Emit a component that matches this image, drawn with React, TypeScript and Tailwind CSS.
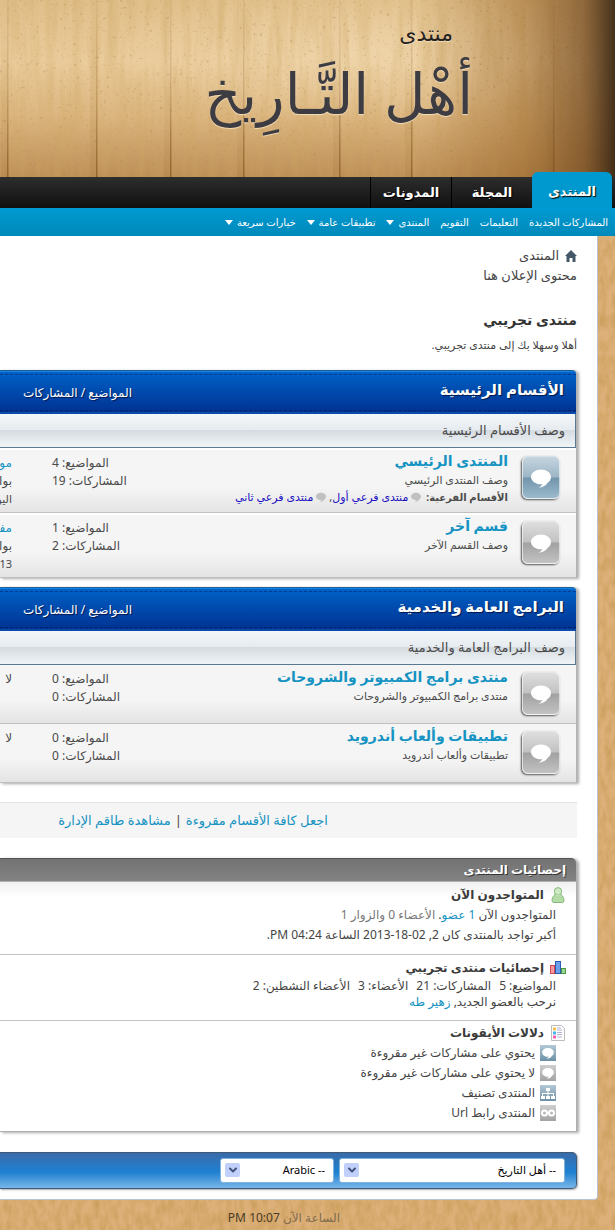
import React from "react";
import { ChevronDown } from "lucide-react";

type Forum = {
  title: string;
  description: string;
  topics: number;
  posts: number;
  isNew?: boolean;
  children?: string[];
  last: { title: string; author?: string; time?: string };
};
type Category = { title: string; description: string; forums: Forum[]; spaced: boolean };

const categories: Category[] = [
  {
    title: "الأقسام الرئيسية",
    description: "وصف الأقسام الرئيسية",
    spaced: true,
    forums: [
      {
        title: "المنتدى الرئيسي",
        description: "وصف المنتدى الرئيسي",
        topics: 4,
        posts: 19,
        isNew: true,
        children: ["منتدى فرعي أول", "منتدى فرعي ثاني"],
        last: { title: "موضوع", author: "بواسطة", time: "اليوم" },
      },
      {
        title: "قسم آخر",
        description: "وصف القسم الآخر",
        topics: 1,
        posts: 2,
        last: { title: "مفيد", author: "بواسطة", time: "13" },
      },
    ],
  },
  {
    title: "البرامج العامة والخدمية",
    description: "وصف البرامج العامة والخدمية",
    spaced: false,
    forums: [
      {
        title: "منتدى برامج الكمبيوتر والشروحات",
        description: "منتدى برامج الكمبيوتر والشروحات",
        topics: 0,
        posts: 0,
        last: { title: "لا" },
      },
      {
        title: "تطبيقات وألعاب أندرويد",
        description: "تطبيقات وألعاب أندرويد",
        topics: 0,
        posts: 0,
        last: { title: "لا" },
      },
    ],
  },
];

function Bubble({ className }: { className: string }) {
  return (
    <svg viewBox="0 0 24 24" className={className} fill="currentColor" aria-hidden="true">
      <path d="M12 3.500C6.500 3.500 2 6.900 2 11s4.500 7.300 10 7.300c.4 0 .9 0 1.300-.1-.7 1.500-2 2.700-3.800 3.600 4-.3 7.300-1.900 9-4.800C20.700 15.600 22 13.500 22 11c0-4.100-4.500-7.500-10-7.500z" />
    </svg>
  );
}

function WoodBackground() {
  return (
    <svg className="absolute inset-0 h-full w-full" aria-hidden="true">
      <filter id="fiber" x="0" y="0" width="100%" height="100%">
        <feTurbulence type="fractalNoise" baseFrequency="0.16 0.07" numOctaves="4" seed="4" />
        <feColorMatrix values="0 0 0 0 0.55  0 0 0 0 0.3  0 0 0 0 0.08  1.2 0 0 0 -0.4" />
      </filter>
      <rect width="100%" height="100%" fill="#dcb078" />
      <rect width="100%" height="100%" filter="url(#fiber)" />
    </svg>
  );
}

const planks = [7, 96, 170, 243, 339, 411, 553];

function BannerBackground() {
  return (
    <svg className="absolute inset-0 h-full w-full" viewBox="0 0 615 177" preserveAspectRatio="xMaxYMid slice" aria-hidden="true">
      <defs>
        <linearGradient id="base" x1="0" y1="0" x2="0" y2="1">
          <stop offset="0" stopColor="#e0bf8a" />
          <stop offset="0.35" stopColor="#eacb9b" />
          <stop offset="0.65" stopColor="#dcb680" />
          <stop offset="1" stopColor="#bd8f57" />
        </linearGradient>
        <radialGradient id="glow" cx="0.57" cy="0.3" r="0.4">
          <stop offset="0" stopColor="#f5dfba" stopOpacity="0.5" />
          <stop offset="1" stopColor="#f5dfba" stopOpacity="0" />
        </radialGradient>
        <linearGradient id="shade" x1="0" y1="0" x2="1" y2="0">
          <stop offset="0.68" stopColor="#8a551a" stopOpacity="0" />
          <stop offset="0.85" stopColor="#8a551a" stopOpacity="0.42" />
          <stop offset="0.95" stopColor="#6b421a" stopOpacity="0.7" />
          <stop offset="1" stopColor="#33210f" stopOpacity="0.9" />
        </linearGradient>
        <linearGradient id="seam" x1="0" y1="0" x2="0" y2="1">
          <stop offset="0" stopColor="#8a5a20" stopOpacity="0.08" />
          <stop offset="0.5" stopColor="#8a5a20" stopOpacity="0.25" />
          <stop offset="1" stopColor="#7b4c18" stopOpacity="0.65" />
        </linearGradient>
        <filter id="grain" x="0" y="0" width="100%" height="100%">
          <feTurbulence type="fractalNoise" baseFrequency="0.11 0.012" numOctaves="4" seed="9" />
          <feColorMatrix values="0 0 0 0 0.6  0 0 0 0 0.38  0 0 0 0 0.12  0.8 0 0 0 -0.3" />
        </filter>
        <filter id="specks" x="0" y="0" width="100%" height="100%">
          <feTurbulence type="fractalNoise" baseFrequency="0.3" numOctaves="3" seed="21" />
          <feColorMatrix values="0 0 0 0 0.42  0 0 0 0 0.25  0 0 0 0 0.08  4 0 0 0 -2.6" />
        </filter>
      </defs>
      <rect width="615" height="177" fill="url(#base)" />
      <rect width="615" height="177" fill="url(#glow)" />
      <rect width="615" height="177" filter="url(#grain)" />
      <rect width="615" height="177" filter="url(#specks)" opacity="0.5" />
      {planks.map((x) => (
        <g key={x}>
          <rect x={x} width="1.500" height="177" fill="url(#seam)" />
          <rect x={x - 6} width="6" height="177" fill="url(#seam)" opacity="0.15" />
        </g>
      ))}
      <rect width="615" height="177" fill="url(#shade)" />
    </svg>
  );
}

function Header() {
  return (
    <header className="relative">
      <div className="relative h-[177px] overflow-hidden">
        <BannerBackground />
        <h1 className="relative pr-[142px] text-[#3c3c42] [text-shadow:0_1px_1px_#f3ddb8]">
          <span className="block pt-4 pr-5 text-[22px] leading-8 text-[#26221f]">منتدى</span>
          <span className="block text-[57px] leading-[88px] whitespace-nowrap">أهْل التَّـارِيخ</span>
        </h1>
      </div>
      <nav className="relative flex h-[31px] items-end bg-linear-to-b from-[#2d2d2d] to-[#111] pr-[3px] text-[13px] font-bold text-white [text-shadow:1px_1px_1px_#000]">
        <a href="#forum" className="flex h-9 w-20 items-center justify-center rounded-t-md bg-[#0099cf] pt-1">المنتدى</a>
        <a href="#mag" className="flex h-[31px] w-[81px] items-center justify-center border-l border-black">المجلة</a>
        <a href="#blogs" className="flex h-[31px] w-[81px] items-center justify-center border-l border-black">المدونات</a>
      </nav>
      <nav className="relative flex h-7 items-center gap-[11px] bg-linear-to-b from-[#009ad2] to-[#0089ba] pr-[7px] text-[10px] whitespace-nowrap text-white">
        <a href="#new">المشاركات الجديدة</a>
        <a href="#help">التعليمات</a>
        <a href="#calendar">التقويم</a>
        {["المنتدى", "تطبيقات عامة", "خيارات سريعة"].map((label) => (
          <button key={label} type="button" className="flex items-center gap-1">
            {label}
            <svg viewBox="0 0 8 5" className="h-[5px] w-2" fill="currentColor" aria-hidden="true">
              <path d="M0 0h8L4 5z" />
            </svg>
          </button>
        ))}
      </nav>
    </header>
  );
}

function ForumIcon({ isNew }: { isNew?: boolean }) {
  return (
    <span
      className={
        "flex h-[43px] w-[38px] items-center justify-center rounded-md border border-white/60 text-white shadow-[-1px_1px_2px_#555] " +
        (isNew
          ? "bg-[linear-gradient(#c6d5df_0%,#9db6c6_48%,#7396ad_52%,#9bb9cb_100%)]"
          : "bg-[linear-gradient(#dedede_0%,#c2c2c2_48%,#a2a2a2_52%,#c2c2c2_100%)]")
      }
    >
      <Bubble className="h-6 w-6" />
    </span>
  );
}

const columns = "grid grid-cols-[minmax(0,1fr)_80px_12px] gap-x-10";

function ForumRow({ forum, spaced }: { forum: Forum; spaced: boolean }) {
  return (
    <li
      className={
        columns +
        " border-b border-[#bfbfbf] bg-linear-to-b from-[#f5f5f5] from-60% to-[#e4e4e4] text-[12px] leading-[18px] whitespace-nowrap text-[#4a4a4a] " +
        (spaced ? "min-h-[65px] border-t-2 border-t-white pt-px" : "min-h-[59px] pt-[2px]")
      }
    >
      <div className="flex gap-[14px] pr-4">
        <div className="pt-[5px]">
          <ForumIcon isNew={forum.isNew} />
        </div>
        <div>
          <h3 className="text-[14px] leading-5 font-bold text-[#1593c2]">
            <a href="#f">{forum.title}</a>
          </h3>
          <p className="text-[11px] leading-[18px]">{forum.description}</p>
          {forum.children && (
            <p className="flex items-center text-[11px] leading-4">
              <strong className="ml-[2px] text-[10px]">الأقسام الفرعية:</strong>
              {forum.children.map((child, i) => (
                <React.Fragment key={child}>
                  <Bubble className="mx-[2px] h-3 w-3 text-[#c0c0c0]" />
                  <a href="#s" className="text-[#1a10c4]">{child}</a>
                  {i === 0 && <span>,</span>}
                </React.Fragment>
              ))}
            </p>
          )}
        </div>
      </div>
      <div className="pt-[3px] text-left">
        <p>المواضيع: {forum.topics}</p>
        <p>المشاركات: {forum.posts}</p>
      </div>
      <div className="pt-[3px]">
        <p className={forum.last.author ? "text-[#1593c2]" : ""}>{forum.last.title}</p>
        <p>{forum.last.author}</p>
        <p className="text-[11px]">{forum.last.time}</p>
      </div>
    </li>
  );
}

function CategoryBlock({ category }: { category: Category }) {
  return (
    <section className="mb-[9px] rounded-tr-[4px] border-r border-[#b5b5b5] shadow-[2px_1px_3px_#aaa]">
      <div className="overflow-hidden rounded-tr-[4px] border-t border-[#1b5f9c] bg-linear-to-b from-[#0062c8] to-[#003090] py-[3px] shadow-[inset_0_1px_0_#1484e0,inset_0_-2px_0_#0a4aa8]">
        <div className={columns + " h-[37px] items-center border-y border-dashed border-t-[#003c92] border-b-[#002468] whitespace-nowrap text-white [text-shadow:1px_1px_1px_#00184d]"}>
          <h2 className="pr-3 pb-[6px] text-[15px] font-bold">{category.title}</h2>
          <span className="text-[12px]">المواضيع / المشاركات</span>
        </div>
      </div>
      <p className="flex h-[34px] items-center border-r border-b border-[#5b7891] bg-[linear-gradient(#f4f7f9_0%,#e6ebef_50%,#d5dce1_50%,#f0f4f7_100%)] pr-[10px] text-[13px] text-[#4a4a4a]">
        {category.description}
      </p>
      <ul>
        {category.forums.map((f) => (
          <ForumRow key={f.title} forum={f} spaced={category.spaced} />
        ))}
      </ul>
    </section>
  );
}

function UserIcon() {
  return (
    <svg viewBox="0 0 16 16" className="h-4 w-4" aria-hidden="true">
      <path d="M5 7.500C3 9 2 11.500 2 13.500q0 2 1.800 2h8.400q1.800 0 1.800-2c0-2-1-4.500-3-6z" fill="#b3dba6" stroke="#86b87c" />
      <circle cx="8" cy="4.300" r="3.700" fill="#cdeac2" stroke="#86b87c" />
      <path d="M5.500 8.200h5" stroke="#c0e2b4" strokeWidth="1.500" />
    </svg>
  );
}

function ChartIcon() {
  return (
    <svg viewBox="0 0 16 16" className="h-4 w-4" aria-hidden="true">
      <rect x="0.500" y="5.500" width="4" height="8" fill="#f59aa0" stroke="#d4454f" />
      <rect x="5.500" y="1.500" width="5" height="12" fill="#6b9fe8" stroke="#2a5cb3" />
      <rect x="11.500" y="8.500" width="4" height="5" fill="#9ad58f" stroke="#4a9a45" />
    </svg>
  );
}

function LegendIcon() {
  return (
    <svg viewBox="0 0 16 16" className="h-4 w-4" aria-hidden="true">
      <path d="M1.500.500h10l3 3v12h-13z" fill="#fff" stroke="#bdbdbd" />
      <path d="M3 2.500h3v3H3z" fill="#f0c24c" />
      <path d="M3 6.500h3v3H3z" fill="#4db4f5" />
      <path d="M3 10.500h3v3H3z" fill="#f261ab" />
      <path d="M7 3h4M7 5h5M7 7.500h5M7 9.500h5M7 12h5" stroke="#b3b3cf" />
    </svg>
  );
}

function LegendTile({ blue, kind }: { blue?: boolean; kind: "bubble" | "tree" | "link" }) {
  return (
    <span
      className={
        "flex h-4 w-4 items-center justify-center text-white " +
        (blue ? "bg-linear-to-b from-[#b4c9d6] to-[#6d90a6]" : "bg-linear-to-b from-[#cfcfcf] to-[#a3a3a3]")
      }
    >
      {kind === "bubble" && <Bubble className="h-[14px] w-[14px]" />}
      {kind === "tree" && (
        <svg viewBox="0 0 16 16" className="h-4 w-4" fill="currentColor" aria-hidden="true">
          <path d="M6 3h4v3H8.500v2H14v3h1v3h-4v-3h2V9H8.500v2H10v3H6v-3h1.500V9H3v2h2v3H1v-3h1V8h5.500V6H6z" />
        </svg>
      )}
      {kind === "link" && (
        <svg viewBox="0 0 16 16" className="h-4 w-4" fill="none" stroke="currentColor" strokeWidth="2" aria-hidden="true">
          <circle cx="4.500" cy="8" r="2.500" />
          <circle cx="11.500" cy="8" r="2.500" />
        </svg>
      )}
    </span>
  );
}

function StatHeading({ icon, children }: { icon: React.ReactNode; children: React.ReactNode }) {
  return (
    <h3 className="flex h-5 items-center gap-[6px] pr-[10px] text-[12px] font-bold text-[#3a3a3a]">
      {icon}
      {children}
    </h3>
  );
}

function Statistics() {
  return (
    <section className="rounded-tr-[5px] border-r border-b border-[#b0b0b0] text-[12px] whitespace-nowrap text-[#444] shadow-[2px_1px_3px_#aaa]">
      <h2 className="flex h-6 items-center rounded-tr-[5px] border-t border-b border-t-[#555] border-b-[#b0b0b0] bg-linear-to-b from-[#737373] to-[#828282] pr-[10px] text-[12px] font-bold text-white [text-shadow:1px_1px_0_#333]">
        إحصائيات المنتدى
      </h2>
      <div className="h-[73px] border-b border-[#c4c4c4] bg-linear-to-b from-[#f0f0f0] to-white to-20% pt-[3px]">
        <StatHeading icon={<UserIcon />}>المتواجدون الآن</StatHeading>
        <p className="pr-5 leading-5">
          المتواجدون الآن <a href="#online" className="text-[#1593c2]">1 عضو</a>. <span className="text-[#777]">الأعضاء 0 والزوار 1</span>
        </p>
        <p className="pr-5 leading-5">أكبر تواجد بالمنتدى كان 2, <bdi dir="ltr">2013-18-02</bdi> الساعة 04:24 PM.</p>
      </div>
      <div className="h-[66px] border-b border-[#c4c4c4] pt-[3px]">
        <StatHeading icon={<ChartIcon />}>إحصائيات منتدى تجريبي</StatHeading>
        <p className="flex gap-2 pr-5 leading-4">
          <span>المواضيع: 5</span>
          <span>المشاركات: 21</span>
          <span>الأعضاء: 3</span>
          <span>الأعضاء النشطين: 2</span>
        </p>
        <p className="pr-5 leading-4">
          نرحب بالعضو الجديد, <a href="#member" className="text-[#1593c2]">زهير طه</a>
        </p>
      </div>
      <div className="h-[110px] pt-[2px]">
        <StatHeading icon={<LegendIcon />}>دلالات الأيقونات</StatHeading>
        <ul className="pr-5">
          <li className="flex h-5 items-center gap-[5px]"><LegendTile kind="bubble" blue />يحتوي على مشاركات غير مقروءة</li>
          <li className="flex h-5 items-center gap-[5px]"><LegendTile kind="bubble" />لا يحتوي على مشاركات غير مقروءة</li>
          <li className="flex h-5 items-center gap-[5px]"><LegendTile kind="tree" blue />المنتدى تصنيف</li>
          <li className="flex h-5 items-center gap-[5px]"><LegendTile kind="link" />المنتدى رابط Url</li>
        </ul>
      </div>
    </section>
  );
}

function Picker({ label, option, wide }: { label: string; option: string; wide?: boolean }) {
  return (
    <div className={"relative " + (wide ? "w-[226px]" : "w-[114px]")}>
      <select aria-label={label} className="block h-[25px] w-full appearance-none rounded-[3px] border border-[#7fb2dd] bg-white pr-2 pl-6 text-[11px] text-black">
        <option>{option}</option>
      </select>
      <span className="pointer-events-none absolute top-[5px] left-[5px] flex h-[14px] w-[15px] items-center justify-center rounded-[2px] bg-[#c1d0fb] text-[#42527c]">
        <ChevronDown className="h-3 w-3" strokeWidth={4} />
      </span>
    </div>
  );
}

export default function App() {
  return (
    <div dir="rtl" lang="ar" className="relative min-h-screen overflow-hidden font-['Noto_Sans','DejaVu_Sans',sans-serif]">
      <WoodBackground />
      <Header />
      <main className="relative mr-[17px] rounded-br-[4px] border-r border-b border-[#b9c3cf] bg-white pr-5 pb-[10px] text-[#444]">
        <div className="pt-[10px] text-[13px]">
          <p className="flex h-5 items-center gap-[6px]">
            <svg viewBox="0 0 12 12" className="h-3 w-3" fill="#44586a" aria-hidden="true">
              <path d="M6 0l6 6H10.500v6h-3V8h-3v4h-3V6H0z" />
            </svg>
            المنتدى
          </p>
          <p className="leading-[18px]">محتوى الإعلان هنا</p>
        </div>
        <h2 className="mt-6 text-[14px] leading-6 font-bold text-[#333]">منتدى تجريبي</h2>
        <p className="pt-1 pb-4 text-[11px] leading-[18px]">أهلا وسهلا بك إلى منتدى تجريبي.</p>
        {categories.map((c) => (
          <CategoryBlock key={c.title} category={c} />
        ))}
        <div className="mt-[19px] mb-5 flex h-9 items-center justify-center gap-1 border-t border-[#e4e4e4] bg-[#f5f5f5] pr-[191px] text-[13px] whitespace-nowrap text-[#1593c2]">
          <a href="#read">اجعل كافة الأقسام مقروءة</a>
          <span className="text-[#444]">|</span>
          <a href="#staff">مشاهدة طاقم الإدارة</a>
        </div>
        <Statistics />
        <div className="mt-5 flex h-[37px] items-center gap-[5px] rounded-r-[5px] border border-l-0 border-[#3d5a78] bg-[linear-gradient(#3a6aa8_0%,#2080d0_50%,#2080d0_55%,#78b6ea_100%)] pr-[11px] shadow-[1px_1px_2px_#aaa]">
          <Picker label="الستايل" option="-- أهل التاريخ" wide />
          <Picker label="اللغة" option="-- Arabic" />
        </div>
      </main>
      <footer className="relative pt-2 pr-[275px] text-[12px] leading-5 text-[#806b4d]">
        الساعة الآن <span className="text-[#4b3b26]">10:07 PM</span>
      </footer>
    </div>
  );
}
